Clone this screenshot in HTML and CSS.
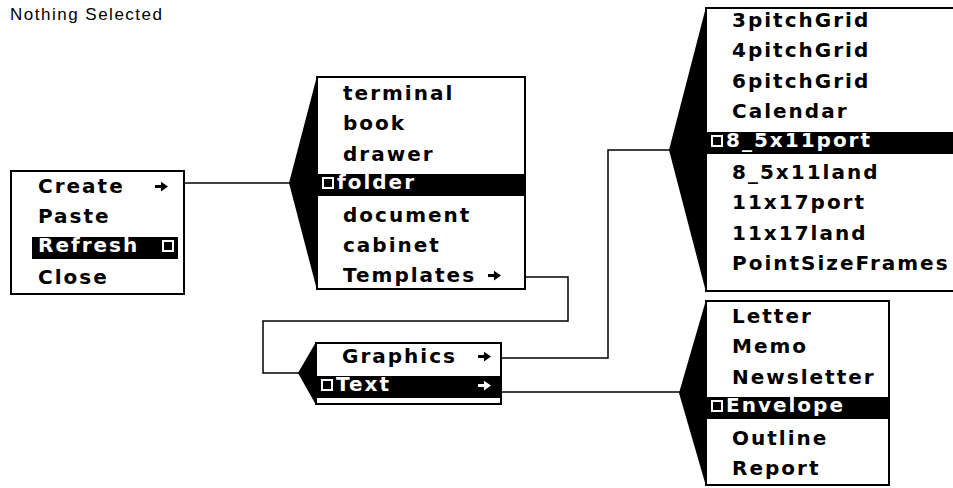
FILE: index.html
```html
<!DOCTYPE html>
<html lang="en">
<head>
    <meta charset="UTF-8">
    <title>Menus</title>
    <link rel="stylesheet" href="styles.css">
</head>
<body>
    <div class="screen">
        <div class="status">Nothing Selected</div>

        <!-- connector lines and the black pull-out wedges -->
        <svg class="wires" width="953" height="488" viewBox="0 0 953 488">
            <defs>
                <symbol id="arrow" viewBox="0 0 12 10">
                    <path d="M0 5 H7" stroke="currentColor" stroke-width="2.8" fill="none"/>
                    <polygon points="5.5,0.5 12,5 5.5,9.5" fill="currentColor"/>
                </symbol>
            </defs>
            <g fill="none" stroke="#000" stroke-width="1.5">
                <polyline points="185,183 291,183"/>
                <polyline points="526,277 568,277 568,321 263,321 263,373 300,373"/>
                <polyline points="502,358 608,358 608,150 671,150"/>
                <polyline points="502,392 681,392"/>
            </g>
            <g fill="#000">
                <polygon points="317,76 289,183 317,290"/>
                <polygon points="316,342 298,373 316,405"/>
                <polygon points="706,7 669,150 706,292"/>
                <polygon points="706,300 679,393 706,486"/>
            </g>
        </svg>

        <div class="menu menu-main">
            <div class="item">Create <svg class="arrow"><use href="#arrow"/></svg></div>
            <div class="item">Paste</div>
            <div class="item sel">Refresh <span class="box box-end"></span></div>
            <div class="item">Close</div>
        </div>

        <div class="menu menu-create">
            <div class="item">terminal</div>
            <div class="item">book</div>
            <div class="item">drawer</div>
            <div class="item sel"><span class="box"></span>folder</div>
            <div class="item">document</div>
            <div class="item">cabinet</div>
            <div class="item">Templates <svg class="arrow arrow-near"><use href="#arrow"/></svg></div>
        </div>

        <div class="menu menu-templates">
            <div class="item">Graphics <svg class="arrow"><use href="#arrow"/></svg></div>
            <div class="item sel"><span class="box"></span>Text <svg class="arrow"><use href="#arrow"/></svg></div>
        </div>

        <div class="menu menu-graphics">
            <div class="item">3pitchGrid</div>
            <div class="item">4pitchGrid</div>
            <div class="item">6pitchGrid</div>
            <div class="item">Calendar</div>
            <div class="item sel"><span class="box"></span>8_5x11port</div>
            <div class="item">8_5x11land</div>
            <div class="item">11x17port</div>
            <div class="item">11x17land</div>
            <div class="item">PointSizeFrames</div>
        </div>

        <div class="menu menu-text">
            <div class="item">Letter</div>
            <div class="item">Memo</div>
            <div class="item">Newsletter</div>
            <div class="item sel"><span class="box"></span>Envelope</div>
            <div class="item">Outline</div>
            <div class="item">Report</div>
        </div>
    </div>
</body>
</html>
```

FILE: styles.css
```css
body {
    margin: 0;
    background: #fff;
    color: #000;
    font-family: 'Liberation Sans', Arial, sans-serif;
}
.screen {
    position: relative;
    width: 953px;
    height: 488px;
    overflow: hidden;
}
.status {
    padding: 5px 0 0 10px;
    font-size: 17px;
    letter-spacing: 1.5px;
}
.wires {
    position: absolute;
    left: 0;
    top: 0;
}

/* menus are placed like nodes on the canvas */
.menu {
    position: absolute;
    box-sizing: border-box;
    display: flex;
    flex-direction: column;
    gap: 10.4px;
    background: #fff;
    border: 2px solid #000;
    font-family: 'DejaVu Sans', sans-serif;
    font-size: 20px;
    font-weight: 700;
    letter-spacing: 2px;
}
.item {
    display: flex;
    align-items: flex-start;
    height: 20px;
    line-height: 20px;
    padding-left: 25px;
    white-space: nowrap;
}
.item.sel {
    background: #000;
    color: #fff;
    line-height: 17px;
    padding-left: 4px;
    padding-bottom: 2px;
    margin-bottom: -2px;
}
.box {
    width: 12px;
    height: 12px;
    box-sizing: border-box;
    border: 2px solid currentColor;
    margin: 3px 3px 0 0;
    flex: none;
}
.arrow {
    width: 13px;
    height: 11px;
    margin: 5px 0 0 auto;
    color: inherit;
    flex: none;
}
.sel .arrow {
    margin-top: 4px;
}
.arrow-near {
    margin-left: 12px;
}

.menu-main {
    left: 10px;
    top: 170px;
    width: 175px;
    height: 125px;
    padding: 4px 5px 0 20px;
}
.menu-main .item {
    padding-left: 6px;
    padding-right: 10px;
}
.menu-main .item.sel {
    padding-left: 6px;
    padding-right: 4px;
}
.menu-main .box-end {
    margin-left: auto;
    margin-right: 0;
}
.menu-create {
    left: 316px;
    top: 76px;
    width: 210px;
    height: 214px;
    padding-top: 5px;
}
.menu-templates {
    left: 315px;
    top: 342px;
    width: 187px;
    height: 63px;
    padding-top: 2px;
}
.menu-templates .item {
    padding-right: 9px;
}
.menu-graphics {
    left: 705px;
    top: 7px;
    width: 270px;
    height: 285px;
    padding-top: 1px;
}
.menu-text {
    left: 705px;
    top: 300px;
    width: 185px;
    height: 186px;
    padding-top: 4px;
}
```
